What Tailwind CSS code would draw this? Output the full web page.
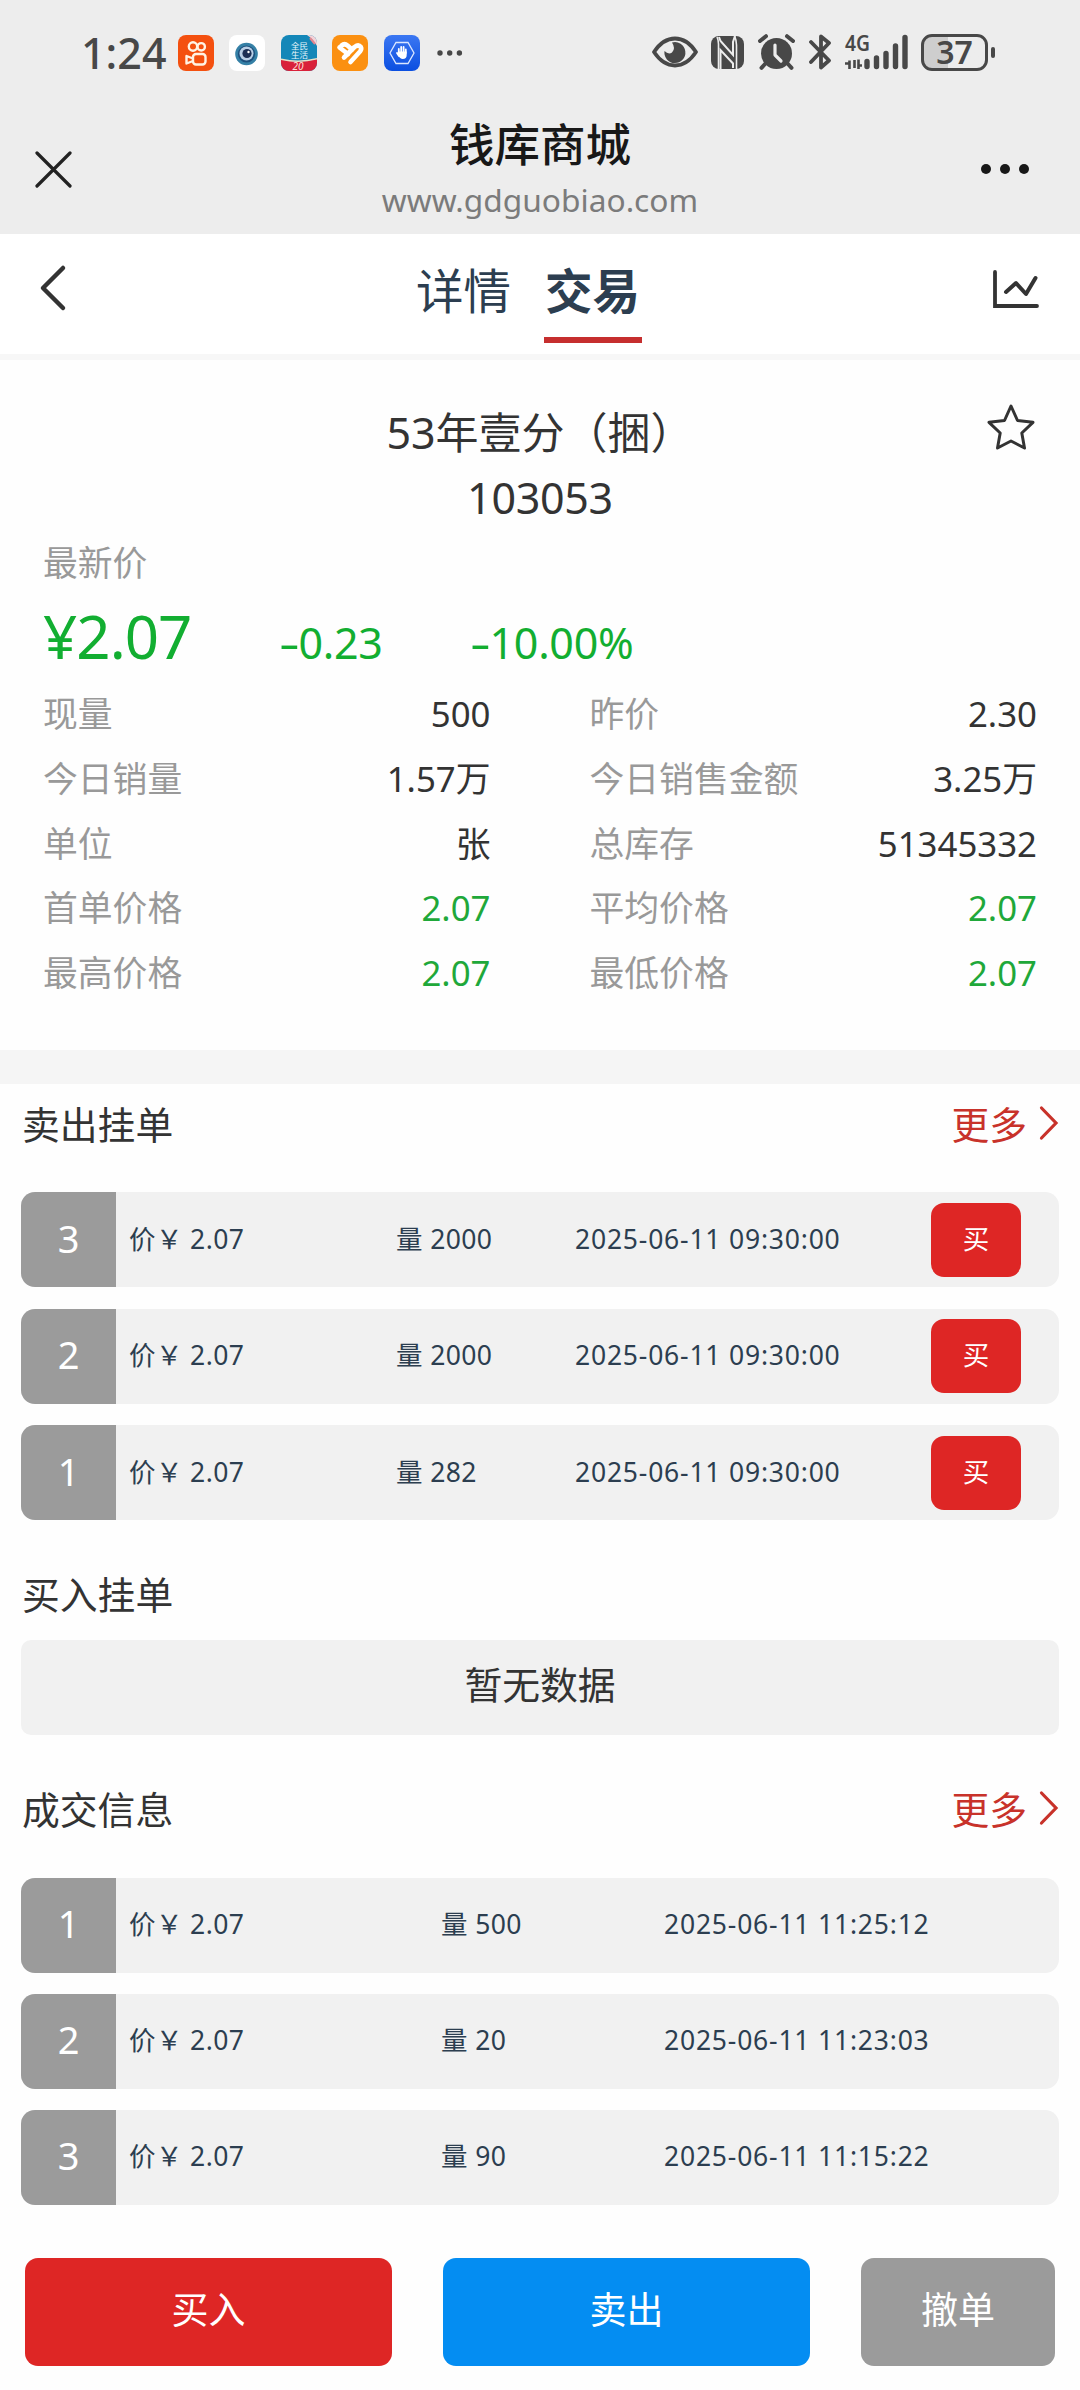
<!DOCTYPE html>
<html lang="zh-CN">
<head>
    <meta charset="UTF-8">
    <meta name="viewport" content="width=device-width, initial-scale=1.0">
    <script src="https://cdn.jsdelivr.net/npm/@tailwindcss/browser@4"></script>
    <title>钱库商城</title>
</head>
<body class="w-[1080px] h-[2390px] overflow-hidden bg-[#fefefe] text-[#333] font-['Noto_Sans','Noto_Sans_CJK_SC',sans-serif]">

  <!-- status bar + browser title -->
  <div class="h-[234px] bg-[#ededed]">
    <div class="h-[106px] flex items-center justify-between pl-[81px] pr-[85px] text-[#484848]">
      <div class="flex items-center">
        <span class="w-[97px] pb-[2px] text-[43px] leading-none font-medium">1:24</span>
        <div class="flex items-center gap-[15.4px]">
          <svg class="size-9" viewBox="0 0 36 36">
            <rect width="36" height="36" rx="8" fill="#f4500f"/>
            <g fill="none" stroke="#fff3e4" stroke-width="2.4">
              <circle cx="15" cy="11.500" r="4.200"/>
              <circle cx="23.200" cy="11.800" r="3.700"/>
              <rect x="15" y="19" width="12.500" height="10.500" rx="3"/>
              <path d="M15 23.500L8.500 21v7.500l6.500-2.500" stroke-linejoin="round"/>
            </g>
          </svg>
          <svg class="size-9" viewBox="0 0 36 36">
            <rect width="36" height="36" rx="8" fill="#fff"/>
            <circle cx="17.500" cy="19" r="11.300" fill="#3580a6"/>
            <circle cx="17.500" cy="19" r="8.600" fill="#1d4f7c"/>
            <circle cx="17.500" cy="18.500" r="7" fill="#b9cfe6"/>
            <circle cx="18" cy="18.500" r="4.600" fill="#1c2f55"/>
            <circle cx="19.500" cy="17" r="1.200" fill="#fff"/>
          </svg>
          <svg class="size-9" viewBox="0 0 36 36">
            <defs><clipPath id="app"><rect width="36" height="36" rx="8"/></clipPath></defs>
            <g clip-path="url(#app)">
              <rect width="36" height="36" fill="#1487b8"/>
              <path d="M0 24.500Q18 29 36 24V36H0z" fill="#d9213a"/>
              <path d="M0 24.300Q18 28.500 36 23.800" fill="none" stroke="#e9e2c8" stroke-width="1.400"/>
              <path d="M26 0h10v11Q32 4 26 0z" fill="#f3d3d8"/>
              <path d="M29 3l5 6" stroke="#e4868f" stroke-width="2"/>
            </g>
            <text x="10" y="13.500" font-size="8.500" fill="#e6f6fb">全民</text>
            <text x="10" y="22.500" font-size="8.500" fill="#e6f6fb">生活</text>
            <text x="11.500" y="34.500" font-size="10" font-style="italic" fill="#ffe1d8">20</text>
          </svg>
          <svg class="size-9" viewBox="0 0 36 36">
            <rect width="36" height="36" rx="8" fill="#fb9011"/>
            <g fill="none" stroke="#fff" stroke-width="4.600" stroke-linecap="round" stroke-linejoin="round">
              <path d="M7.500 12.500l8.500 6.500"/>
              <path d="M9.500 10.500q3-2.500 6 0l4.500 4"/>
              <path d="M12 22.500L22.500 12q4-3 6.300 0 1.200 2-.8 4.500L18.500 27"/>
            </g>
          </svg>
          <svg class="size-9" viewBox="0 0 36 36">
            <defs><linearGradient id="blue" x2="0" y2="1"><stop stop-color="#3b77f2"/><stop offset="1" stop-color="#0b4fe0"/></linearGradient></defs>
            <rect width="36" height="36" rx="8" fill="url(#blue)"/>
            <path d="M12 7.500h12l6 10.500-6 10.500H12L6 18z" fill="none" stroke="#dbe7ff" stroke-width="1.300"/>
            <path d="M14.800 18v-4M17.200 17v-5M19.600 17v-5M21.800 18v-3.500M13 18l2 3" stroke="#fff" stroke-width="1.800" stroke-linecap="round"/>
            <path d="M13.900 16.500h8.800v3.500q0 4-4 4-2.600 0-4.800-4z" fill="#fff"/>
          </svg>
        </div>
        <svg class="ml-[16px] w-7 h-3" viewBox="0 0 28 12" fill="currentColor"><circle cx="4" cy="6" r="2.700"/><circle cx="13.700" cy="6" r="2.700"/><circle cx="23.400" cy="6" r="2.700"/></svg>
      </div>

      <div class="flex items-center pb-[2px]">
        <svg class="w-[46px] h-[32px]" viewBox="0 0 46 32">
          <path d="M2 16Q11 2.500 23 2.500T44 16Q35 29.500 23 29.500T2 16z" fill="none" stroke="currentColor" stroke-width="3.800" stroke-linejoin="round"/>
          <path d="M20 6.500A10.500 10.500 0 1 1 12.500 15Q16.500 19 20 16.500Q24 12.500 20 6.500z" fill="currentColor"/>
        </svg>
        <svg class="ml-[13.500px] w-[33px] h-[33px]" viewBox="0 0 33 33">
          <rect width="33" height="33" rx="8" fill="currentColor"/>
          <path d="M9.500 33V14L22 27.500V32M8 1l1.500 4L22 19V6l2-6" fill="none" stroke="#ededed" stroke-width="2"/>
          <path d="M7.500 33V8q0-4-1.500-7M25.500 33V9q0-5-2-9" fill="none" stroke="#ededed" stroke-width="1.600"/>
        </svg>
        <svg class="ml-[14px] w-[37px] h-[36px]" viewBox="0 0 37 36">
          <circle cx="18.500" cy="19.500" r="15.500" fill="currentColor"/>
          <path d="M2 7l6-4.800M35 7l-6-4.800M7 30l-3.500 3.800M30 30l3.500 3.800" stroke="currentColor" stroke-width="4" stroke-linecap="round"/>
          <path d="M17 11v10l6 6" fill="none" stroke="#ededed" stroke-width="3.200" stroke-linecap="round" stroke-linejoin="round"/>
        </svg>
        <svg class="ml-[14px] w-[23px] h-[36px]" viewBox="0 0 23 36">
          <path d="M2 8l18 18.500-8 7V2.500l8 6.500L2 28" fill="none" stroke="currentColor" stroke-width="3.800" stroke-linecap="round" stroke-linejoin="round"/>
        </svg>
        <svg class="ml-[13px] w-[65px] h-[36px] overflow-visible" viewBox="0 0 65 36">
          <text x="0" y="17" font-size="22" font-weight="600" textLength="25" lengthAdjust="spacingAndGlyphs" fill="currentColor">4G</text>
          <path d="M0 29.500h4.500V26.500v8.500M9.500 26v8M13.500 35V25.500M13.500 31.500h3.500" fill="none" stroke="currentColor" stroke-width="2.600"/>
          <path d="M22 27.500v5M31.500 24v8.500M41 19.500v13M50.500 12v20.500M60 3.500v29" stroke="currentColor" stroke-width="5.400" stroke-linecap="round"/>
        </svg>
        <div class="ml-[11px] flex items-center gap-[3px]">
          <div class="w-[67px] h-[37px] rounded-[11px] border-[3px] border-[#484848] bg-linear-to-r from-[#cecece] from-40% to-[#ededed] to-40% flex items-center justify-center text-[32px] leading-none font-semibold">37</div>
          <div class="w-[4px] h-[11px] rounded bg-[#484848]"></div>
        </div>
      </div>
    </div>

    <div class="h-[126px] flex items-center justify-between px-[35px]">
      <svg class="w-[37px] h-[37px]" viewBox="0 0 37 37"><path d="M2 2l33 33M35 2L2 35" stroke="#222" stroke-width="3.200" stroke-linecap="round"/></svg>
      <div class="w-[400px] ml-[28px] text-center">
        <h1 class="text-[45.500px] leading-[54px] font-medium text-[#181818]">钱库商城</h1>
        <p class="mt-[8px] text-[31.700px] leading-[42px] text-[#7b7b7b]">www.gdguobiao.com</p>
      </div>
      <svg class="mr-[15px] w-[50px] h-3" viewBox="0 0 50 12" fill="#181818"><circle cx="6" cy="6" r="5"/><circle cx="25" cy="6" r="5"/><circle cx="44" cy="6" r="5"/></svg>
    </div>
  </div>

  <!-- tabs -->
  <div class="h-[126px] flex items-start justify-between pl-[38px] pr-[40px] bg-white border-b-[6px] border-[#f7f7f7] text-[#2c3e50]">
    <svg class="mt-[30px] w-[30px] h-[48px]" viewBox="0 0 30 48"><path d="M25 4L5 24l20 20" fill="none" stroke="#333" stroke-width="4.500" stroke-linecap="round" stroke-linejoin="round"/></svg>
    <div class="flex gap-[31px] mr-[4px] text-[47.500px] leading-[60px]">
      <div class="w-[98px] h-[109px] pt-[27px] text-center">详情</div>
      <div class="w-[98px] h-[109px] pt-[27px] text-center font-bold border-b-[6px] border-[#c62f2f]">交易</div>
    </div>
    <svg class="mt-[36px] w-[48px] h-[40px]" viewBox="0 0 48 40"><path d="M3 2v34h42" fill="none" stroke="#333" stroke-width="3.800" stroke-linecap="round"/><path d="M14 22l10-9 10 11L43.500 8" fill="none" stroke="#333" stroke-width="4" stroke-linecap="round" stroke-linejoin="round"/></svg>
  </div>

  <!-- quote -->
  <div class="h-[690px] px-[43px] pt-[40px] bg-[#fefefe]">
    <div class="relative text-center text-[43px] leading-[65px]">
      <p>53年壹分（捆）</p>
      <p class="tracking-[-0.3px]">103053</p>
      <svg class="absolute right-0 top-[2px] w-[52px] h-[50px]" viewBox="0 0 52 50"><path d="M26 4l6.500 14.500L48 20.300 36.800 31 39.500 46 26 39 12.500 46 15.200 31 4 20.300l15.500-1.800z" fill="none" stroke="#333" stroke-width="3" stroke-linejoin="round"/></svg>
    </div>
    <p class="text-[34.800px] leading-[65px] text-[#999]">最新价</p>
    <div class="flex items-baseline h-[86px] leading-[82px] text-[#12ae31]">
      <span class="w-[236px] text-[60px] tracking-[-1px]">¥2.07</span>
      <span class="w-[191px] text-[43px] tracking-[-0.3px]"><span class="inline-block origin-left scale-x-150 mr-[6px]">-</span>0.23</span>
      <span class="text-[43px] tracking-[-0.3px]"><span class="inline-block origin-left scale-x-150 mr-[6px]">-</span>10.00%</span>
    </div>
    <div class="grid grid-cols-2 gap-x-[99px] pt-px text-[34.800px] leading-[64.800px]">
      <div class="flex justify-between"><span class="text-[#999]">现量</span><span>500</span></div>
      <div class="flex justify-between"><span class="text-[#999]">昨价</span><span>2.30</span></div>
      <div class="flex justify-between"><span class="text-[#999]">今日销量</span><span>1.57万</span></div>
      <div class="flex justify-between"><span class="text-[#999]">今日销售金额</span><span>3.25万</span></div>
      <div class="flex justify-between"><span class="text-[#999]">单位</span><span>张</span></div>
      <div class="flex justify-between"><span class="text-[#999]">总库存</span><span>51345332</span></div>
      <div class="flex justify-between"><span class="text-[#999]">首单价格</span><span class="text-[#1fa83a]">2.07</span></div>
      <div class="flex justify-between"><span class="text-[#999]">平均价格</span><span class="text-[#1fa83a]">2.07</span></div>
      <div class="flex justify-between"><span class="text-[#999]">最高价格</span><span class="text-[#1fa83a]">2.07</span></div>
      <div class="flex justify-between"><span class="text-[#999]">最低价格</span><span class="text-[#1fa83a]">2.07</span></div>
    </div>
  </div>
  <div class="h-[34px] bg-[#f5f5f5]"></div>

  <!-- sell orders -->
  <div class="px-[21px]">
    <div class="h-[108px] pt-[11px] flex justify-between pl-px text-[37.800px] leading-[60px]">
      <h2>卖出挂单</h2>
      <div class="flex items-start gap-[12px] text-[#c8322a]">更多<svg class="mt-[10px] w-[20px] h-[36px]" viewBox="0 0 20 36"><path d="M2.500 3L17 18 2.500 33" fill="none" stroke="currentColor" stroke-width="3.200" stroke-linecap="round"/></svg></div>
    </div>
    <div class="flex flex-col gap-[21.500px] text-[26.500px] text-[#2c3e50]">
      <div class="flex items-center h-[95px] rounded-[14px] overflow-hidden bg-[#f1f1f1]">
        <div class="w-[95px] h-full pb-[3px] flex items-center justify-center bg-[#9b9b9b] text-white text-[38px]">3</div>
        <div class="w-[267px] pl-[13px] tracking-[0.4px]">价￥ 2.07</div>
        <div class="w-[178px] pl-[13px] tracking-[0.4px]">量 2000</div>
        <div class="w-[370px] pl-[14px] tracking-[0.8px]">2025-06-11 09:30:00</div>
        <button class="w-[90px] h-[74px] rounded-[13px] bg-[#de2625] text-white">买</button>
      </div>
      <div class="flex items-center h-[95px] rounded-[14px] overflow-hidden bg-[#f1f1f1]">
        <div class="w-[95px] h-full pb-[3px] flex items-center justify-center bg-[#9b9b9b] text-white text-[38px]">2</div>
        <div class="w-[267px] pl-[13px] tracking-[0.4px]">价￥ 2.07</div>
        <div class="w-[178px] pl-[13px] tracking-[0.4px]">量 2000</div>
        <div class="w-[370px] pl-[14px] tracking-[0.8px]">2025-06-11 09:30:00</div>
        <button class="w-[90px] h-[74px] rounded-[13px] bg-[#de2625] text-white">买</button>
      </div>
      <div class="flex items-center h-[95px] rounded-[14px] overflow-hidden bg-[#f1f1f1]">
        <div class="w-[95px] h-full pb-[3px] flex items-center justify-center bg-[#9b9b9b] text-white text-[38px]">1</div>
        <div class="w-[267px] pl-[13px] tracking-[0.4px]">价￥ 2.07</div>
        <div class="w-[178px] pl-[13px] tracking-[0.4px]">量 282</div>
        <div class="w-[370px] pl-[14px] tracking-[0.8px]">2025-06-11 09:30:00</div>
        <button class="w-[90px] h-[74px] rounded-[13px] bg-[#de2625] text-white">买</button>
      </div>
    </div>
  </div>

  <!-- buy orders -->
  <div class="px-[21px] pt-[45px] text-[37.800px]">
    <h2 class="h-[75px] pl-px leading-[60px]">买入挂单</h2>
    <div class="h-[95px] rounded-[10px] bg-[#f1f1f1] text-center leading-[90px]">暂无数据</div>
  </div>

  <!-- deals -->
  <div class="px-[21px] pt-[45px]">
    <div class="h-[98px] flex justify-between pl-px text-[37.800px] leading-[60px]">
      <h2>成交信息</h2>
      <div class="flex items-start gap-[12px] text-[#c8322a]">更多<svg class="mt-[10px] w-[20px] h-[36px]" viewBox="0 0 20 36"><path d="M2.500 3L17 18 2.500 33" fill="none" stroke="currentColor" stroke-width="3.200" stroke-linecap="round"/></svg></div>
    </div>
    <div class="flex flex-col gap-[21.500px] text-[26.500px] text-[#2c3e50]">
      <div class="flex items-center h-[94.500px] rounded-[14px] overflow-hidden bg-[#f1f1f1]">
        <div class="w-[95px] h-full pb-[4px] flex items-center justify-center bg-[#9b9b9b] text-white text-[38px]">1</div>
        <div class="w-[312px] pl-[13px] tracking-[0.4px]">价￥ 2.07</div>
        <div class="w-[222px] pl-[13px] tracking-[0.4px]">量 500</div>
        <div class="pl-[14px] tracking-[0.8px]">2025-06-11 11:25:12</div>
      </div>
      <div class="flex items-center h-[94.500px] rounded-[14px] overflow-hidden bg-[#f1f1f1]">
        <div class="w-[95px] h-full pb-[4px] flex items-center justify-center bg-[#9b9b9b] text-white text-[38px]">2</div>
        <div class="w-[312px] pl-[13px] tracking-[0.4px]">价￥ 2.07</div>
        <div class="w-[222px] pl-[13px] tracking-[0.4px]">量 20</div>
        <div class="pl-[14px] tracking-[0.8px]">2025-06-11 11:23:03</div>
      </div>
      <div class="flex items-center h-[94.500px] rounded-[14px] overflow-hidden bg-[#f1f1f1]">
        <div class="w-[95px] h-full pb-[4px] flex items-center justify-center bg-[#9b9b9b] text-white text-[38px]">3</div>
        <div class="w-[312px] pl-[13px] tracking-[0.4px]">价￥ 2.07</div>
        <div class="w-[222px] pl-[13px] tracking-[0.4px]">量 90</div>
        <div class="pl-[14px] tracking-[0.8px]">2025-06-11 11:15:22</div>
      </div>
    </div>
  </div>

  <!-- bottom actions -->
  <div class="flex justify-between pt-[53px] px-[25px] text-[37px] leading-[102px] text-white">
    <button class="w-[367px] h-[108px] pb-[3px] rounded-[13px] bg-[#de2625]">买入</button>
    <button class="w-[367px] h-[108px] pb-[3px] rounded-[13px] bg-[#048df2]">卖出</button>
    <button class="w-[194px] h-[108px] pb-[3px] rounded-[13px] bg-[#9b9b9b]">撤单</button>
  </div>
</body>
</html>
